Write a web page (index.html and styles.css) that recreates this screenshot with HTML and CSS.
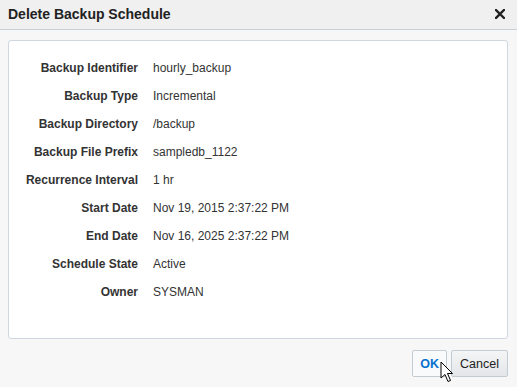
FILE: index.html
```html
<!DOCTYPE html>
<html>
<head>
    <title>Delete Backup Schedule</title>
    <link rel="stylesheet" href="styles.css">
</head>
<body>
    <div class="dialog">
        <div class="dialog-header">
            <span class="dialog-title">Delete Backup Schedule</span>
            <svg class="close" width="10" height="10" viewBox="0 0 10 10">
                <path d="M1 1 L9 9 M9 1 L1 9" stroke="#222" stroke-width="2.4" stroke-linecap="square"/>
            </svg>
        </div>

        <div class="dialog-body">
            <div class="panel">
                <div class="form">
                    <div class="label">Backup Identifier</div>
                    <div class="value">hourly_backup</div>

                    <div class="label">Backup Type</div>
                    <div class="value">Incremental</div>

                    <div class="label">Backup Directory</div>
                    <div class="value">/backup</div>

                    <div class="label">Backup File Prefix</div>
                    <div class="value">sampledb_1122</div>

                    <div class="label">Recurrence Interval</div>
                    <div class="value">1 hr</div>

                    <div class="label">Start Date</div>
                    <div class="value">Nov 19, 2015 2:37:22 PM</div>

                    <div class="label">End Date</div>
                    <div class="value">Nov 16, 2025 2:37:22 PM</div>

                    <div class="label">Schedule State</div>
                    <div class="value">Active</div>

                    <div class="label">Owner</div>
                    <div class="value">SYSMAN</div>
                </div>
            </div>

            <div class="buttons">
                <button class="btn btn-ok">OK</button>
                <button class="btn">Cancel</button>
                <!-- mouse pointer sitting over the OK button -->
                <svg class="cursor" width="14" height="22" viewBox="0 0 14 22">
                    <path d="M1 1 L1 17 L5 13.5 L8 20.5 L10.5 19.5 L7.5 12.5 L12.5 12.5 Z"
                          fill="#fff" stroke="#000" stroke-width="1" stroke-linejoin="miter"/>
                </svg>
            </div>
        </div>
    </div>
</body>
</html>
```

FILE: styles.css
```css
* {
    box-sizing: border-box;
}
body {
    margin: 0;
    font-family: "Liberation Sans", Arial, sans-serif;
    font-size: 12px;
    color: #333;
    background-color: #f7f7f7;
}
.dialog {
    width: 517px;
    height: 387px;
    display: flex;
    flex-direction: column;
}
.dialog-header {
    height: 30px;
    display: flex;
    align-items: center;
    justify-content: space-between;
    padding: 0 12px 1px 8px;
    background-color: #f0f0f0;
    border-bottom: 1px solid #c9d1d8;
}
.dialog-title {
    font-size: 14px;
    font-weight: bold;
    color: #222;
}
.dialog-body {
    padding: 10px 9px 0 8px;
}
.panel {
    height: 299px;
    background-color: #fff;
    border: 1px solid #cfd8e0;
    border-radius: 3px;
    padding-top: 13px;
}
.form {
    display: grid;
    grid-template-columns: 129px auto;
    column-gap: 15px;
    grid-auto-rows: 28px;
    align-items: center;
}
.label {
    text-align: right;
    font-weight: bold;
    color: #333;
}
.value {
    color: #333;
}
.buttons {
    position: relative;
    display: flex;
    justify-content: flex-end;
    gap: 4px;
    margin-top: 11px;
}
.btn {
    height: 27px;
    padding: 0 8px;
    font-family: "Liberation Sans", Arial, sans-serif;
    font-size: 12.5px;
    color: #222;
    border: 1px solid #c4ccd3;
    border-radius: 2px;
    background: linear-gradient(#f4f5f6, #e3e6e9);
}
.btn-ok {
    width: 35px;
    padding: 0;
    color: #0572ce;
    font-weight: bold;
    background: #f9fafb;
}
.cursor {
    position: absolute;
    left: 432px;
    top: 11px;
}
```
